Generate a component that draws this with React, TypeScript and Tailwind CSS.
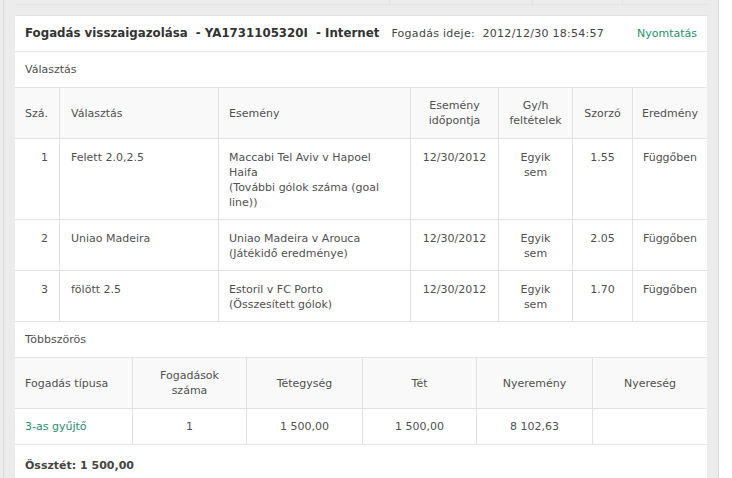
const SELECTIONS = [
  {
    no: "1",
    pick: "Felett 2.0,2.5",
    event: ["Maccabi Tel Aviv v Hapoel", "Haifa", "(További gólok száma (goal", "line))"],
    date: "12/30/2012",
    odds: "1.55",
    h: "h-[81px]",
  },
  {
    no: "2",
    pick: "Uniao Madeira",
    event: ["Uniao Madeira v Arouca", "(Játékidő eredménye)"],
    date: "12/30/2012",
    odds: "2.05",
    h: "h-[51px]",
  },
  {
    no: "3",
    pick: "fölött 2.5",
    event: ["Estoril v FC Porto", "(Összesített gólok)"],
    date: "12/30/2012",
    odds: "1.70",
    h: "h-[51px]",
  },
];

const COLS1 = "grid grid-cols-[44px_159px_192px_88px_74px_60px_75px]";
const COLS2 = "grid grid-cols-[117px_114px_116px_114px_116px_115px]";
const LINE = "border-[#e2e2e2]";

export default function App() {
  return (
    <div
      className="w-[732px] h-[478px] bg-white overflow-hidden text-[11px] leading-[15px] text-[#505050]"
      style={{ fontFamily: '"DejaVu Sans", Verdana, sans-serif' }}
    >
      <div className="w-[719px] h-full bg-[#ececec] border-r border-[#d6d6d6] pl-[3px]">
        <div className="h-full border-l border-[#dadada] pl-[11px] pr-[11px]">
          {/* tail of the table above */}
          <div className={`h-[5px] border-b ${LINE} flex`}>
            <div className="w-[374px]" />
            <div className={`w-[143px] border-l ${LINE}`} />
            <div className={`w-[90px] border-l ${LINE}`} />
            <div className={`flex-1 border-l ${LINE}`} />
          </div>

          <div className={`mt-[10px] bg-white border-t ${LINE}`}>
            {/* title */}
            <div className={`h-[36px] border-b ${LINE} flex items-center px-[10px]`}>
              <span className="font-bold text-[11.8px] text-[#333] whitespace-pre">
                Fogadás visszaigazolása  - YA1731105320I  - Internet
              </span>
              <span className="ml-[12px] whitespace-pre tracking-[0.28px] text-[#444]">
                Fogadás ideje:  2012/12/30 18:54:57
              </span>
              <span className="ml-auto text-[#1f8f70]">Nyomtatás</span>
            </div>

            <div className={`h-[36px] border-b ${LINE} flex items-center px-[10px]`}>Választás</div>

            {/* selections header */}
            <div className={`${COLS1} h-[51px] border-b ${LINE} bg-[#f9f9f9]`}>
              <div className="flex items-center px-[10px]">Szá.</div>
              <div className={`flex items-center px-[11px] border-l ${LINE}`}>Választás</div>
              <div className={`flex items-center px-[10px] border-l ${LINE}`}>Esemény</div>
              <div className={`flex items-center justify-center text-center border-l ${LINE}`}>
                Esemény
                <br />
                időpontja
              </div>
              <div className={`flex items-center justify-center text-center border-l ${LINE}`}>
                Gy/h
                <br />
                feltételek
              </div>
              <div className={`flex items-center justify-center border-l ${LINE}`}>Szorzó</div>
              <div className={`flex items-center justify-center border-l ${LINE}`}>Eredmény</div>
            </div>

            {SELECTIONS.map((s) => (
              <div key={s.no} className={`${COLS1} ${s.h} border-b ${LINE}`}>
                <div className="pt-[11px] pr-[11px] text-right">{s.no}</div>
                <div className={`pt-[11px] px-[11px] border-l ${LINE}`}>{s.pick}</div>
                <div className={`pt-[11px] px-[10px] border-l ${LINE} whitespace-nowrap`}>
                  {s.event.map((l) => (
                    <div key={l}>{l}</div>
                  ))}
                </div>
                <div className={`pt-[11px] text-center border-l ${LINE}`}>{s.date}</div>
                <div className={`pt-[11px] text-center border-l ${LINE}`}>
                  Egyik
                  <br />
                  sem
                </div>
                <div className={`pt-[11px] text-center border-l ${LINE}`}>{s.odds}</div>
                <div className={`pt-[11px] text-center border-l ${LINE}`}>Függőben</div>
              </div>
            ))}

            <div className={`h-[36px] border-b ${LINE} flex items-center px-[10px]`}>Többszörös</div>

            {/* multiples */}
            <div className={`${COLS2} h-[51px] border-b ${LINE} bg-[#f9f9f9]`}>
              <div className="flex items-center px-[10px]">Fogadás típusa</div>
              <div className={`flex items-center justify-center text-center border-l ${LINE}`}>
                Fogadások
                <br />
                száma
              </div>
              <div className={`flex items-center justify-center border-l ${LINE}`}>Tétegység</div>
              <div className={`flex items-center justify-center border-l ${LINE}`}>Tét</div>
              <div className={`flex items-center justify-center border-l ${LINE}`}>Nyeremény</div>
              <div className={`flex items-center justify-center border-l ${LINE}`}>Nyereség</div>
            </div>
            <div className={`${COLS2} h-[36px] border-b ${LINE}`}>
              <div className="flex items-center px-[10px] text-[#1f8f70]">3-as gyűjtő</div>
              <div className={`flex items-center justify-center border-l ${LINE}`}>1</div>
              <div className={`flex items-center justify-center border-l ${LINE}`}>1 500,00</div>
              <div className={`flex items-center justify-center border-l ${LINE}`}>1 500,00</div>
              <div className={`flex items-center justify-center border-l ${LINE}`}>8 102,63</div>
              <div className={`border-l ${LINE}`} />
            </div>

            <div className="h-[40px] flex items-center px-[10px] font-bold text-[#444]">Össztét: 1 500,00</div>
          </div>
        </div>
      </div>
    </div>
  );
}
